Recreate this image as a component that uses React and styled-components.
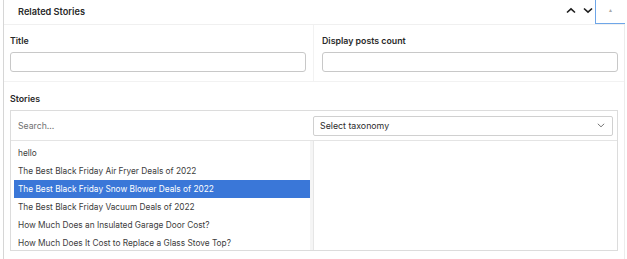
import React from "react";
import styled, { createGlobalStyle } from "styled-components";

const Global = createGlobalStyle`
  html, body { margin: 0; padding: 0; background: #fff; }
  body { font-family: Inter, "Open Sans", "Liberation Sans", sans-serif; -webkit-font-smoothing: antialiased; }
  * { box-sizing: border-box; }
`;

const Panel = styled.div`
  margin-left: 3px;
  width: 622px;
  height: 259px;
  border-left: 1px solid #d6d6d6;
  border-right: 1px solid #ececec;
  display: flex;
  flex-direction: column;
`;

const Header = styled.div`
  height: 25px;
  display: flex;
  align-items: stretch;
  border-bottom: 1px solid #f0f0f0;
`;

const HeaderTitle = styled.h2`
  flex: 1;
  margin: 0;
  padding-left: 14px;
  padding-bottom: 2px;
  display: flex;
  align-items: center;
  font-size: 9.2px;
  font-weight: 600;
  color: #2a2a2a;
`;

const MoveButton = styled.button`
  border: 0;
  background: none;
  padding: 0 0 3px 3px;
  width: 17px;
  display: flex;
  align-items: center;
  justify-content: center;
  color: #1e1e1e;
`;

const Toggle = styled.button`
  width: 30px;
  margin-left: 0;
  margin-right: -1px;
  border: 0;
  border-left: 1px solid #6ea6e8;
  border-bottom: 1px solid #6ea6e8;
  background: #fff;
  padding: 0 0 3px 0;
  display: flex;
  align-items: center;
  justify-content: center;
  color: #a8a8a8;
  font-size: 5px;
`;

const FieldsRow = styled.div`
  display: grid;
  grid-template-columns: 309px 1fr;
  border-bottom: 1px solid #f2f2f2;
  height: 57px;
`;

const Field = styled.div`
  padding: ${(p) => (p.$right ? "9px 6px 0 8px" : "9px 7px 0 6px")};
  border-left: ${(p) => (p.$right ? "1px solid #f2f2f2" : "0")};
`;

const Label = styled.label`
  display: block;
  font-size: 8.8px;
  font-weight: 600;
  color: #2a2a2a;
  line-height: 13px;
  margin-bottom: 5px;
`;

const TextInput = styled.input`
  display: block;
  width: 100%;
  height: 20px;
  border: 1px solid #c8c8c8;
  border-radius: 3px;
  background: #fff;
  padding: 0 6px;
`;

const Stories = styled.div`
  padding: 10px 6px 0 6px;
`;

const Box = styled.div`
  border: 1px solid #dcdcdc;
  height: 141px;
  display: flex;
  flex-direction: column;
`;

const SearchRow = styled.div`
  height: 30px;
  display: grid;
  grid-template-columns: 302px 1fr;
  align-items: center;
  border-bottom: 1px solid #e4e4e4;
`;

const SearchInput = styled.input`
  border: 0;
  outline: none;
  padding: 0 0 0 7px;
  font-family: inherit;
  font-size: 8.7px;
  color: #333;
  background: transparent;
  &::placeholder { color: #707070; }
`;

const Select = styled.div`
  height: 20px;
  margin-right: 4px;
  border: 1px solid #d0d0d0;
  border-radius: 2px;
  display: flex;
  align-items: center;
  justify-content: space-between;
  padding: 0 7px 0 6px;
  font-size: 8.8px;
  color: #2c2c2c;
`;

const Lists = styled.div`
  flex: 1;
  display: grid;
  grid-template-columns: 302px 1fr;
  min-height: 0;
`;

const ItemList = styled.ul`
  list-style: none;
  margin: 0;
  padding: 3px 0 0 3px;
  border-right: 3px solid #f5f5f5;
  overflow: hidden;
`;

const Item = styled.li`
  height: 18px;
  line-height: 18px;
  padding-left: 4px;
  font-size: 8.3px;
  white-space: nowrap;
  color: ${(p) => (p.$selected ? "#fff" : "#3c3c3c")};
  background: ${(p) => (p.$selected ? "#3a77d8" : "transparent")};
`;

const Selected = styled.div`
  border-left: 1px solid #e6e6e6;
`;

const Chevron = ({ up }) => (
  <svg width="10" height="7" viewBox="0 0 10 7" fill="none">
    <polyline
      points={up ? "1,5.5 5,1.8 9,5.5" : "1,1.5 5,5.2 9,1.5"}
      stroke="currentColor"
      strokeWidth="1.6"
    />
  </svg>
);

const SmallChevron = () => (
  <svg width="8" height="5" viewBox="0 0 8 5" fill="none">
    <polyline points="0.8,0.8 4,3.8 7.2,0.8" stroke="#777" strokeWidth="1" />
  </svg>
);

const items = [
  "hello",
  "The Best Black Friday Air Fryer Deals of 2022",
  "The Best Black Friday Snow Blower Deals of 2022",
  "The Best Black Friday Vacuum Deals of 2022",
  "How Much Does an Insulated Garage Door Cost?",
  "How Much Does It Cost to Replace a Glass Stove Top?",
];

export default function App() {
  return (
    <>
      <Global />
      <Panel>
        <Header>
          <HeaderTitle>Related Stories</HeaderTitle>
          <MoveButton aria-label="Move up"><Chevron up /></MoveButton>
          <MoveButton aria-label="Move down"><Chevron /></MoveButton>
          <Toggle aria-label="Toggle panel">▲</Toggle>
        </Header>
        <FieldsRow>
          <Field>
            <Label>Title</Label>
            <TextInput />
          </Field>
          <Field $right>
            <Label>Display posts count</Label>
            <TextInput />
          </Field>
        </FieldsRow>
        <Stories>
          <Label>Stories</Label>
          <Box>
            <SearchRow>
              <SearchInput placeholder="Search..." />
              <Select>
                <span>Select taxonomy</span>
                <SmallChevron />
              </Select>
            </SearchRow>
            <Lists>
              <ItemList>
                {items.map((t, i) => (
                  <Item key={t} $selected={i === 2}>{t}</Item>
                ))}
              </ItemList>
              <Selected />
            </Lists>
          </Box>
        </Stories>
      </Panel>
    </>
  );
}
